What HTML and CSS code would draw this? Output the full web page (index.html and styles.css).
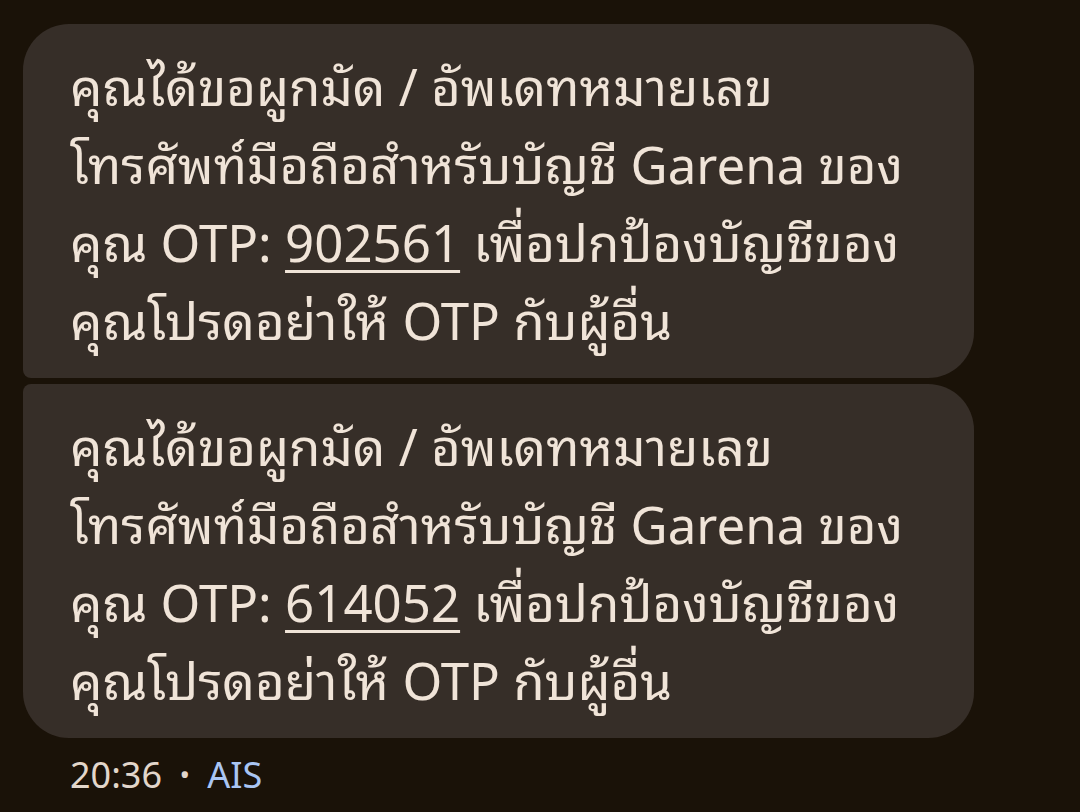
FILE: index.html
```html
<!DOCTYPE html>
<html lang="th">
<head>
<meta charset="UTF-8">
<meta name="viewport" content="width=device-width, initial-scale=1.0">
<title>ข้อความ</title>
<link rel="stylesheet" href="styles.css">
</head>
<body>
<div class="thread">
    <div class="bubble first">
        คุณได้ขอผูกมัด / อัพเดทหมายเลข<br>
        โทรศัพท์มือถือสำหรับบัญชี Garena ของ<br>
        คุณ OTP: <span class="code">902561</span> เพื่อปกป้องบัญชีของ<br>
        คุณโปรดอย่าให้ OTP กับผู้อื่น
    </div>
    <div class="bubble last">
        คุณได้ขอผูกมัด / อัพเดทหมายเลข<br>
        โทรศัพท์มือถือสำหรับบัญชี Garena ของ<br>
        คุณ OTP: <span class="code">614052</span> เพื่อปกป้องบัญชีของ<br>
        คุณโปรดอย่าให้ OTP กับผู้อื่น
    </div>
    <div class="meta">20:36 <span class="dot">•</span> <span class="sim">AIS</span></div>
</div>
</body>
</html>
```

FILE: styles.css
```css
body {
    margin: 0;
    background-color: #1a1208;
    font-family: "Noto Sans Thai Looped", "Noto Sans", sans-serif;
    color: #f0e4d8;
}
.thread {
    padding: 24px 0 0 23px;
    display: flex;
    flex-direction: column;
    gap: 6px;
}
.bubble {
    width: 951px;
    box-sizing: border-box;
    background-color: #362e28;
    padding: 20px 20px 22px 47px;
    font-size: 51px;
    line-height: 78px;
    white-space: nowrap;
}
.bubble.first {
    border-radius: 46px 46px 46px 8px;
}
.bubble.last {
    border-radius: 8px 46px 46px 46px;
}
.code {
    text-decoration: underline;
    text-decoration-thickness: 3px;
    text-underline-offset: 8px;
}
.meta {
    padding: 8px 0 0 47px;
    font-size: 36px;
    line-height: 40px;
    color: #e2d6cb;
}
.dot {
    font-size: 28px;
    vertical-align: 3px;
    margin: 0 8px;
}
.sim {
    color: #a9c5f3;
}
```
